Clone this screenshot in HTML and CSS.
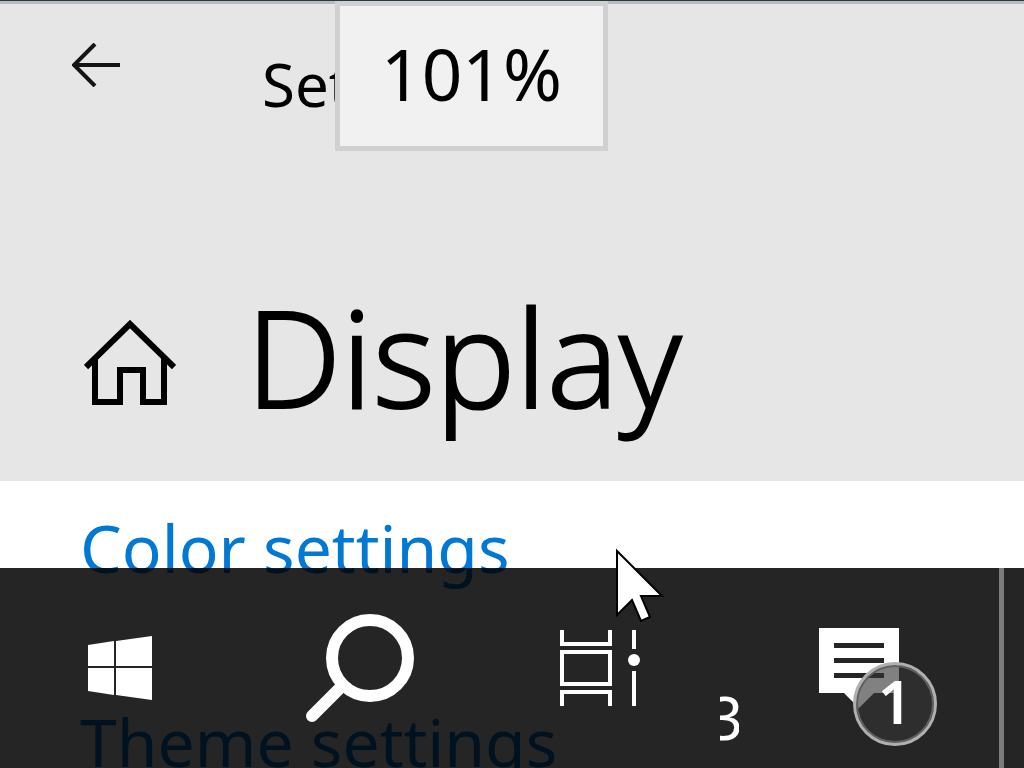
FILE: index.html
```html
<!DOCTYPE html>
<html lang="en">
<head>
    <meta charset="UTF-8">
    <meta name="viewport" content="width=device-width, initial-scale=1.0">
    <title>Settings</title>
    <link rel="stylesheet" href="styles.css">
</head>
<body>
    <header class="top">
        <div class="titlebar">
            <button class="back" type="button" aria-label="Back">
                <svg width="48" height="44" viewBox="0 0 48 44">
                    <path d="M23 1L2 22l21 21M2 22h46" fill="none" stroke="#151515" stroke-width="4"/>
                </svg>
            </button>
            <span class="app-name">Settings</span>
            <output class="zoom-level">101%</output>
        </div>
        <div class="heading">
            <a class="home" href="#" aria-label="Home">
                <svg width="92" height="86" viewBox="0 0 92 86">
                    <path d="M2 47L46 4l44 43M11 37v45h25V50h23v32h21V37" fill="none" stroke="#000" stroke-width="6"/>
                </svg>
            </a>
            <h1>Display</h1>
        </div>
    </header>
    <main class="links">
        <a href="#">Color settings</a>
        <a href="#">Theme settings</a>
    </main>
    <nav class="taskbar">
        <button class="task" type="button" aria-label="Start">
            <svg width="64" height="64" viewBox="0 0 64 64" fill="#fff">
                <path d="M0 9l26-4v25H0zM28 5l36-5v30H28zM0 32h26v27L0 55zM28 32h36v32l-36-5z"/>
            </svg>
        </button>
        <button class="task" type="button" aria-label="Search">
            <svg width="108" height="108" viewBox="0 0 108 108" fill="none" stroke="#fff" stroke-width="12">
                <circle cx="64" cy="44" r="38"/>
                <path d="M37 71L6 102" stroke-linecap="round"/>
            </svg>
        </button>
        <button class="task" type="button" aria-label="Task View">
            <svg width="80" height="76" viewBox="0 0 80 76" fill="none" stroke="#fff" stroke-width="4">
                <path d="M2 0v14h48V0M2 22h48v32H2zM2 76V62h48v14M74 0v19M74 41v35"/>
                <circle cx="74" cy="30" r="6" fill="#fff" stroke="none"/>
            </svg>
        </button>
        <div class="clock"><span>3</span></div>
        <button class="task" type="button" aria-label="Notifications">
            <span class="notes">
                <svg width="80" height="80" viewBox="0 0 80 80">
                    <path d="M0 0h80v65H55L40 80 25 65H0z" fill="#fff"/>
                    <path d="M15 17.500h50M15 32.500h50M15 47.500h50" stroke="#252525" stroke-width="5"/>
                </svg>
                <span class="badge">1</span>
            </span>
        </button>
        <button class="show-desktop" type="button" aria-label="Show desktop"></button>
    </nav>
    <svg class="cursor" width="50" height="76" viewBox="0 0 50 76">
        <path d="M2 3v64l15-15 9 21 9-4-9-21h21z" fill="#fff" stroke="#000" stroke-width="2"/>
    </svg>
</body>
</html>
```

FILE: styles.css
```css
*{
    margin: 0;
    padding: 0;
    box-sizing: border-box;
}
body{
    height: 100vh;
    overflow: hidden;
    background-color: #fff;
    color: #000;
    font-family: "Noto Sans", "Open Sans", sans-serif;
}
svg{
    display: block;
}
button{
    border: none;
    background: none;
    font-family: inherit;
}
.top{
    height: 481px;
    border-top: 1px solid #263c3c;
    background-color: #e6e6e6;
}
.titlebar{
    position: relative;
    display: flex;
    align-items: flex-start;
    height: 256px;
    padding-top: 39px;
    border-top: 3px solid #b8bcbe;
}
.back{
    width: 192px;
    padding-left: 72px;
    margin-right: 70px;
}
.app-name{
    font-size: 60px;
    line-height: 82px;
}
.zoom-level{
    position: absolute;
    top: -3px;
    left: 335px;
    width: 273px;
    padding-bottom: 4px;
    border: 5px solid #d0d0d2;
    background-color: #f1f1f1;
    font-size: 71px;
    line-height: 136px;
    text-align: center;
}
.heading{
    display: flex;
    align-items: flex-start;
}
.home{
    padding: 63px 0 0 84px;
    margin-right: 70px;
}
h1{
    font-size: 134px;
    font-weight: 300;
    line-height: 198px;
    -webkit-text-stroke: 2px #000;
}
.links{
    display: flex;
    flex-direction: column;
    gap: 98px;
    padding: 18px 80px;
}
.links a{
    color: #0078d4;
    font-size: 66px;
    line-height: 96px;
    text-decoration: none;
    white-space: nowrap;
}
.taskbar{
    position: fixed;
    bottom: 0;
    left: 0;
    right: 0;
    display: flex;
    height: 200px;
    background-color: rgba(0, 0, 0, 0.855);
    color: #fff;
}
.task{
    display: flex;
    align-items: center;
    justify-content: center;
    width: 240px;
    color: #fff;
}
.clock{
    display: flex;
    flex: 1;
    align-items: flex-end;
    justify-content: flex-end;
    padding-bottom: 10px;
    overflow: hidden;
    font-size: 60px;
    line-height: 82px;
}
.clock span{
    margin-right: -4px;
}
.notes{
    position: relative;
}
.badge{
    position: absolute;
    top: 34px;
    left: 34px;
    width: 84px;
    height: 84px;
    border: 3px solid #b0b0b0;
    border-radius: 50%;
    background-color: rgba(51, 51, 51, 0.62);
    box-shadow: inset 0 0 0 2px #606060;
    font-size: 60px;
    font-weight: 600;
    line-height: 72px;
    text-align: center;
}
.show-desktop{
    width: 25px;
    margin-left: 20px;
    border-left: 5px solid #7c7c7c;
}
.cursor{
    position: fixed;
    top: 548px;
    left: 615px;
}
```
